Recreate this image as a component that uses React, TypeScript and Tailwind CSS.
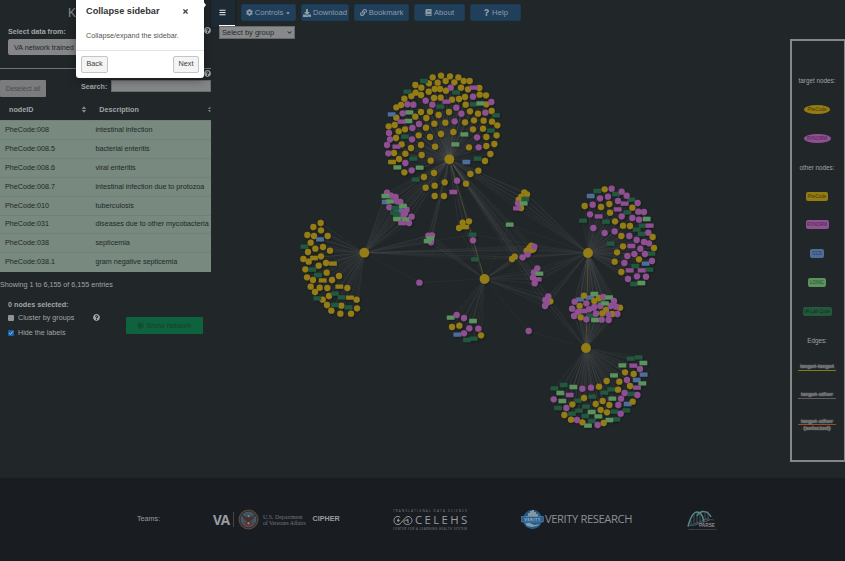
import React from "react";
import { FaBars, FaBook, FaCog, FaDownload, FaLink, FaQuestion, FaQuestionCircle, FaTimes, FaChevronDown, FaCaretDown } from "react-icons/fa";

type Point = [number, number];
type Kind = "Y" | "P" | "Q" | "R" | "D" | "L" | "B";
type Cluster = { origin: Point; hubs: Point[]; nodes: Partial<Record<Kind, string>>; faint?: boolean };

const COLORS: Record<Kind, string> = {
  Y: "#947b12", P: "#905092", Q: "#947b12", R: "#905092", D: "#24583c", L: "#5a935d", B: "#4d6d9b",
};

const HUB_TOP: Point = [449.3, 159.3];
const HUB_LEFT: Point = [364.3, 252.7];
const HUB_MID: Point = [484.5, 279];
const HUB_RIGHT: Point = [588, 253];
const HUB_LOW: Point = [586, 348];
const HUBS = [HUB_TOP, HUB_LEFT, HUB_MID, HUB_RIGHT, HUB_LOW];

// Node coordinates are in thirds of a pixel from each cluster's origin.
const CLUSTERS: Cluster[] = [
  {
    origin: [375, 65], hubs: [HUB_TOP],
    nodes: {
      Y: "173,37;198,32;225,34;250,37;266,48;284,48;188,53;212,48;238,52;162,55;121,60;139,68;179,72;195,72;213,77;258,68;279,73;313,69;122,83;161,80;109,93;138,90;88,101;177,99;197,98;231,104;252,102;270,96;314,89;333,91;272,119;334,118;64,127;78,120;138,141;165,140;121,155;191,150;222,141;285,139;309,146;350,138;64,158;154,159;297,166;326,167;351,170;367,181;41,184;59,180;90,193;71,199;153,188;178,176;211,173;270,172;324,191;294,193;365,211;334,216;235,201;198,207;131,211;165,216;63,219;80,238;108,249;138,240;180,245;282,247;334,243;358,237;346,267;330,288;57,264;91,266;72,282;140,270;167,287;88,322;147,336;177,324;310,317;286,327;273,356;209,352;179,362;152,368;179,393;207,393",
      P: "227,68;294,95;349,111;152,107;97,118;115,119;172,119;83,145;244,128;259,146;331,143;132,177;239,169;112,189;42,204;45,223;36,240;40,265;111,223;306,217;311,247;91,294;110,316;246,347",
      D: "147,48;97,80;243,82;196,125;296,118;363,151;348,197;90,215;115,281;308,281;122,344",
      L: "316,115;103,142;100,168;268,208;241,238;67,307;134,308",
      R: "296,68;214,110;79,170;64,245;235,381", B: "50,148;274,291", Q: "51,291",
    },
  },
  {
    origin: [290, 180], hubs: [HUB_LEFT],
    nodes: {
      Y: "92,129;70,141;93,151;52,165;72,168;113,168;62,188;76,206;99,201;54,216;120,212;40,237;56,245;93,229;86,257;108,249;46,268;110,278;51,292;69,300;126,300;147,288;62,320;89,323;112,324;75,336;172,324;117,348;98,359;200,359;111,375;154,377;201,385;124,392;151,401;183,401",
      Q: "72,234;129,251;98,301;148,320;180,353",
      D: "43,200;67,269;84,285;135,341;82,355;155,352;135,375;175,382", B: "90,178",
    },
  },
  {
    origin: [290, 180], hubs: [HUB_LEFT, HUB_TOP],
    nodes: {
      P: "291,38;303,47;317,51;321,64;331,66;298,82;336,95;350,89;345,100;365,110;357,129;340,107",
      B: "287,66;325,88", D: "316,84;312,98;320,103", L: "286,48;300,64;339,78;321,117;346,118", R: "336,129",
    },
  },
  { origin: [410, 180], hubs: [HUB_LEFT, HUB_TOP, HUB_MID], nodes: { P: "55,167;66,166;63,187", L: "53,183;61,175" } },
  { origin: [410, 180], hubs: [HUB_LEFT, HUB_MID], nodes: { P: "28,308" }, faint: true },
  { origin: [410, 180], hubs: [HUB_LEFT, HUB_RIGHT], nodes: { D: "188,164;195,238" }, faint: true },
  { origin: [410, 180], hubs: [HUB_TOP, HUB_MID], nodes: { Y: "158,128;177,124;147,144", Q: "165,141", P: "189,181" } },
  { origin: [410, 180], hubs: [HUB_TOP, HUB_RIGHT], nodes: { Y: "343,37;351,43;334,50;326,59;333,84", D: "346,57", P: "324,70", L: "341,70", R: "321,85" } },
  { origin: [410, 180], hubs: [HUB_MID, HUB_RIGHT], nodes: { L: "299,134" }, faint: true },
  { origin: [410, 180], hubs: [HUB_RIGHT, HUB_MID, HUB_LEFT, HUB_TOP], nodes: { Y: "314,230;306,237;364,197;358,204;370,208;364,210;350,212", P: "338,232;353,223;373,200" }, faint: true },
  { origin: [410, 180], hubs: [HUB_MID, HUB_RIGHT, HUB_TOP], nodes: { P: "382,265;372,277;369,293;374,310", R: "383,298", L: "388,281" } },
  { origin: [410, 180], hubs: [HUB_MID, HUB_RIGHT, HUB_LOW, HUB_TOP], nodes: { Y: "421,364", P: "415,349;406,360;405,378;411,368" } },
  { origin: [410, 180], hubs: [HUB_MID, HUB_LOW], nodes: { P: "356,453" }, faint: true },
  {
    origin: [410, 180], hubs: [HUB_MID],
    nodes: { L: "122,413;189,423", P: "140,405;162,414;178,445;205,446;162,460", Y: "126,441;148,437;213,466", B: "142,464", D: "191,476;171,480" },
  },
  {
    origin: [560, 180], hubs: [HUB_RIGHT],
    nodes: {
      D: "112,33;168,42;214,59;202,97;69,122;138,125;248,137;230,149;245,162;152,191;274,221;226,258;268,269;222,312",
      R: "194,71;173,88;116,109;269,137;214,198;209,271;245,271",
      Y: "134,28;74,78;123,81;148,72;150,98;217,83;165,124;189,137;210,138;184,168;278,171;282,204;189,199;171,217;164,245;184,276;237,238",
      P: "155,26;185,35;200,47;144,50;120,55;98,74;174,63;233,69;90,103;185,109;235,95;252,96;217,114;237,119;100,144;134,159;164,154;208,168;265,158;230,180;252,186;267,190;241,206;255,222;223,222;202,228;193,249;276,243;231,289;258,290;204,297",
      L: "260,117;244,309", B: "92,48;257,251",
    },
  },
  {
    origin: [560, 180], hubs: [HUB_RIGHT, HUB_LOW],
    nodes: {
      D: "92,407;125,363;52,395", B: "60,358;90,353",
      Y: "72,347;103,363;117,354;59,378;138,390;127,400;180,383;157,402;62,412",
      R: "70,393;95,386",
      P: "44,365;79,370;36,386;42,408;54,396;87,388;103,381;121,378;130,351;162,363;152,378;168,380;108,401;146,403;172,402;79,418;125,419;146,420",
      L: "103,342;147,352;135,370;105,420",
    },
  },
  {
    origin: [540, 320], hubs: [HUB_LOW],
    nodes: {
      D: "272,116;296,112;43,205;71,195;157,230;114,242;193,218;214,208;54,264;96,281;117,272;138,260;136,288;156,303;229,298;259,271;223,275;274,222",
      R: "280,137;291,203;89,225", B: "311,164;290,180;263,252",
      Y: "255,157;281,162;238,185;270,198;234,209;200,183;177,200;132,234;97,253;188,243;167,252;208,255;182,270;201,277;278,245;73,285;93,299;127,307;191,309",
      P: "300,147;261,180;254,219;292,225;243,236;235,255;242,281;127,206;153,203;41,238;79,264;111,300;173,315",
      L: "310,129;247,136;222,166;307,190;100,201;61,219;67,243;217,236;155,276;175,289;144,317;208,300",
    },
  },
];

const placed = CLUSTERS.flatMap((c) =>
  (Object.entries(c.nodes) as [Kind, string][]).flatMap(([kind, list]) =>
    list.split(";").map((pair) => {
      const [a, b] = pair.split(",").map(Number);
      return { kind, x: c.origin[0] + a / 3, y: c.origin[1] + b / 3, hubs: c.hubs, faint: c.faint };
    }),
  ),
);

function Network() {
  return (
    <svg className="absolute left-0 top-0 pointer-events-none" width="845" height="478" viewBox="0 0 845 478">
      <defs>
        {HUBS.map(([x, y], i) => (
          <radialGradient key={i} id={`edge${i}`} gradientUnits="userSpaceOnUse" cx={x} cy={y} r="60">
            <stop offset="0" stopColor="#777" stopOpacity="0.1" />
            <stop offset="0.35" stopColor="#808080" stopOpacity="0.15" />
            <stop offset="1" stopColor="#858585" stopOpacity="0.16" />
          </radialGradient>
        ))}
        <filter id="soft" x="-5%" y="-5%" width="110%" height="110%">
          <feDropShadow dx="0.9" dy="0.9" stdDeviation="0.8" floodColor="#000" floodOpacity="0.35" />
        </filter>
      </defs>
      {placed.flatMap((n, i) =>
        n.hubs.map((h, j) => (
          <line key={`${i}-${j}`} x1={n.x} y1={n.y} x2={h[0]} y2={h[1]} stroke={`url(#edge${HUBS.indexOf(h)})`} strokeWidth="0.7" opacity={n.faint ? 0.65 : 0.9} />
        )),
      )}
      <path d="M449.3 159.3 484.5 279M588 253 586 348" stroke="#65602f" strokeWidth="0.8" opacity="0.75" />
      <g filter="url(#soft)">
        {placed.map((n, i) =>
          n.kind === "Y" || n.kind === "P" ? (
            <circle key={i} cx={n.x} cy={n.y} r="3.15" fill={COLORS[n.kind]} />
          ) : (
            <rect key={i} x={n.x - 3.9} y={n.y - 2.2} width="7.8" height="4.4" rx="0.6" fill={COLORS[n.kind]} />
          ),
        )}
        {HUBS.map(([x, y]) => (
          <circle key={x} cx={x} cy={y} r="4.9" fill="#947b12" />
        ))}
      </g>
    </svg>
  );
}

const ROWS = [
  ["PheCode:008", "intestinal infection"],
  ["PheCode:008.5", "bacterial enteritis"],
  ["PheCode:008.6", "viral enteritis"],
  ["PheCode:008.7", "intestinal infection due to protozoa"],
  ["PheCode:010", "tuberculosis"],
  ["PheCode:031", "diseases due to other mycobacteria"],
  ["PheCode:038", "septicemia"],
  ["PheCode:038.1", "gram negative septicemia"],
];

function Sidebar() {
  return (
    <aside className="w-[211px] h-[478px] shrink-0 flex flex-col overflow-hidden text-[7.2px] leading-[9px] text-[#a2a5a7]">
      <h1 className="h-[26px] pl-[68px] pt-[6px] text-[12px] leading-[14px] text-[#8c9298]">K</h1>
      <div className="h-[13px] flex justify-between pl-2">
        <b className="pt-px tracking-[-0.03px]">Select data from:</b>
        <FaQuestionCircle className="size-[7px] mt-[1px]" />
      </div>
      <div className="ml-2 h-4 w-[180px] shrink-0 rounded-[2px] bg-[#858688] pl-[6px] leading-[17px] text-[#20262b]">VA network trained</div>
      <div className="mt-[13px] h-px shrink-0 bg-[#727577]" />
      <div className="h-[11px] shrink-0 flex justify-end pt-[1px]"><FaQuestionCircle className="size-[7px]" /></div>
      <div className="h-[22px] shrink-0 flex">
        <div className="h-[17px] w-[46px] rounded-[1px] bg-[#7a7c7d] text-center leading-[17px] text-[6.7px] text-[#494c4e]">Deselect all</div>
        <b className="ml-[35px] mt-[2px]">Search:</b>
        <div className="ml-auto h-[12px] w-[100px] border border-[#696b6d] bg-[#858688]" />
      </div>
      <div className="h-[18px] shrink-0 flex items-center pb-[4px] font-bold">
        <span className="w-[74px] pl-[9px]">nodeID</span>
        <svg className="ml-[8px] mr-[11px] w-[6px] h-[7px]" viewBox="0 0 6 7"><path d="M.7 3 3 .2 5.3 3ZM.7 4 3 6.8 5.3 4Z" fill="#858a8c" /></svg>
        <span className="w-[111px] pl-px">Description</span>
        <svg className="w-[3px] h-[7px]" viewBox="0 0 3 7"><path d="M0 3 2.3 .4V3ZM0 4H2.3V6.6Z" fill="#858a8c" /></svg>
      </div>
      <div className="h-[152px] shrink-0 bg-[#78897f] text-[#20282a]">
        {ROWS.map(([id, text]) => (
          <div key={id} className="h-[18.92px] flex items-center border-t border-[#718177] pb-[1px] whitespace-nowrap">
            <span className="w-[95.5px] pl-[5px]">{id}</span><span className="tracking-[-0.01px]">{text}</span>
          </div>
        ))}
      </div>
      <p className="mt-[8px] tracking-[-0.01px]">Showing 1 to 6,155 of 6,155 entries</p>
      <div className="mt-[11px] flex pl-2">
        <div className="w-[118px]">
          <b className="tracking-[0.01px]">0 nodes selected:</b>
          <div className="mt-[4px] flex items-center">
            <span className="size-[6px] rounded-[1px] bg-[#929394] mr-[4px]" />Cluster by groups
            <FaQuestionCircle className="ml-auto size-[7px] mr-[26px]" />
          </div>
          <div className="mt-[6px] flex items-center">
            <span className="size-[6px] rounded-[1px] bg-[#1762aa] mr-[4px]"><svg viewBox="0 0 6 6"><path d="m1.2 3 1.3 1.3L4.8 1.5" stroke="#dce4ea" strokeWidth=".8" fill="none" /></svg></span>Hide the labels
          </div>
        </div>
        <div className="mt-[17px] h-[17px] w-[77px] shrink-0 rounded-[1px] bg-[#0e633e] flex items-center justify-center gap-[2px] text-[#173f2c]">
          <svg className="size-[7px]" viewBox="0 0 8 8" fill="none" stroke="currentColor" strokeWidth=".8"><circle cx="4" cy="4" r="3.2" /><path d="m3 2.4 2.5 1.6L3 5.6Z" fill="currentColor" /></svg>
          Show network
        </div>
      </div>
    </aside>
  );
}

function Toolbar() {
  const button = "h-[17px] shrink-0 rounded-[2px] bg-[#203f5b] border border-[#1d3a53] flex items-center justify-center gap-[2px]";
  return (
    <nav className="flex pt-1 text-[7.7px] leading-[9px] text-[#8e9ca8]">
      <div className={`${button} w-[55px]`}><FaCog className="size-[7px]" />Controls<FaCaretDown className="size-[6px]" /></div>
      <div className={`${button} w-[48px] ml-[5px] gap-[1px]`}><FaDownload className="size-[8px]" />Download</div>
      <div className={`${button} w-[55px] ml-[5px]`}><FaLink className="size-[7px]" />Bookmark</div>
      <div className={`${button} w-[51px] ml-[5px] gap-[1px]`}><FaBook className="size-[7px]" />About</div>
      <div className={`${button} w-[51px] ml-[5px] gap-[1px]`}><FaQuestion className="size-[7px]" />Help</div>
    </nav>
  );
}

function Tour() {
  const button = "h-[17px] rounded-[2px] border border-[#c5c5c5] bg-[#f4f4f4] flex items-center justify-center text-[7.3px] text-[#424242]";
  return (
    <div className="absolute left-[76px] top-[-6px] h-[83.5px] w-[128px] rounded-[3px] bg-white shadow-[0_2px_10px_rgba(15,15,15,0.45)] flex flex-col text-[#333]">
      <div className="h-[34px] flex items-center pl-[10px] pr-[15px] justify-between">
        <b className="text-[9.2px] leading-[12px]">Collapse sidebar</b><FaTimes className="size-[7px] text-[#444]" />
      </div>
      <p className="h-[22px] pl-[10px] pt-[3px] text-[7.2px] leading-[9px] text-[#555]">Collapse/expand the sidebar.</p>
      <div className="border-t border-[#e4e4e4] flex items-center justify-between px-[5px] pt-[5px]">
        <div className={`${button} w-[27px]`}>Back</div><div className={`${button} w-[26px]`}>Next</div>
      </div>
      <svg className="absolute left-[127px] top-[6px]" width="4" height="10"><path d="M0 1 3 5 0 9Z" fill="white" /></svg>
    </div>
  );
}

const OTHER = [
  ["PheCode", "w-[22px] bg-[#947b12] text-[#42380e]"],
  ["RXNORM", "w-[23px] bg-[#905092] text-[#402744]"],
  ["CCS", "w-[14px] bg-[#4d6d9b] text-[#26364c]"],
  ["LOINC", "w-[18px] bg-[#5a935d] text-[#29462d]"],
  ["VA Lab Code", "w-[29px] bg-[#24583c] text-[#142d20]"],
];
const EDGES = [
  ["target-target", "bg-[#85791b]"],
  ["target-other", "bg-[#5c5d5e]"],
  ["target-other", "bg-[#9c4d21]"],
];

function Legend() {
  const cell = "h-[28.8px] shrink-0 flex items-center justify-center";
  return (
    <section className="ml-auto mt-[39px] h-[423px] w-[55px] shrink-0 border-2 border-r border-[#858789] pr-[2px] pt-[25.5px] flex flex-col text-[6.3px] leading-[7px] text-[#a1a4a6] whitespace-nowrap">
      <div className={cell}>target nodes:</div>
      <div className={cell}><span className="h-[9px] w-[26px] rounded-[50%] bg-[#947b12] text-center text-[4.6px] leading-[9px] text-[#42380e]">PheCode</span></div>
      <div className={cell}><span className="h-[9px] w-[27px] rounded-[50%] bg-[#905092] text-center text-[4.5px] leading-[9px] text-[#402744]">RXNORM</span></div>
      <div className={cell}>other nodes:</div>
      {OTHER.map(([label, style]) => (
        <div key={label} className={cell}><span className={`${style} h-[9px] rounded-[2px] text-center text-[4.5px] leading-[9px]`}>{label}</span></div>
      ))}
      <div className={cell}>Edges:</div>
      {EDGES.map(([label, style], i) => (
        <div key={i} className={cell}>
          <div className={`relative w-[38px] text-center text-[6.2px] leading-[6.5px] text-[#4b4d4f] [text-shadow:0_0_1px_#c5c5c5,0_0_1px_#c5c5c5] ${i === 2 ? "-top-[1.5px]" : "-top-[3px]"}`}>
            <span className={`${style} absolute left-0 w-full h-px ${i === 2 ? "top-[6px]" : "top-[7px]"}`} />
            <span className="relative">{label}{i === 2 && <><br />(selected)</>}</span>
          </div>
        </div>
      ))}
    </section>
  );
}

function Footer() {
  return (
    <footer className="h-[83px] bg-[#191c21] flex items-center pl-[137px] text-[#9a9da0]">
      <span className="w-[76px] shrink-0 text-[7.2px]">Teams:</span>
      <b className="w-[20px] shrink-0 text-[13.5px] leading-[16px] tracking-[-1.1px] font-['Open_Sans',sans-serif]">VA</b>
      <span className="h-[15px] w-px shrink-0 bg-[#42464a]" />
      <svg className="ml-[4px] shrink-0" width="21" height="21" viewBox="0 0 21 21">
        <circle cx="10.5" cy="10.5" r="9.4" fill="#222f43" stroke="#58483a" strokeWidth="1.3" />
        <circle cx="10.5" cy="10.5" r="7.3" fill="#395472" stroke="#776346" strokeWidth=".7" />
        <path d="M5 13h11l-2 3-3.5 1.5L7 16Z" fill="#6d3338" />
        <path d="M4 5.8c1 4 3 5 5 7l-1 2h5l-1-2c2-2 4-3 5-7-2 1-3.2 1-4.4 3l-2.1-2-2.1 2C7.2 6.8 6 6.8 4 5.8Z" fill="#443127" />
        <path d="m9.5 7 1-1 1.2 1-1 1.5ZM9 14l1.5-1 1.5 1-1.5 1.5Z" fill="#9b8a6c" />
      </svg>
      <span className="ml-[4px] w-[49.5px] shrink-0 whitespace-nowrap text-[5.9px] leading-[6px] text-[#74777a] font-['Liberation_Serif',serif]">U.S. Department<br /><span className="tracking-[-0.08px]">of Veterans Affairs</span></span>
      <b className="w-[80.5px] shrink-0 text-[7.2px]">CIPHER</b>
      <div className="w-[77px] shrink-0 whitespace-nowrap font-['Open_Sans',sans-serif]">
        <div className="text-[3px] leading-[4px] tracking-[1.18px] text-[#83878b]">TRANSLATIONAL DATA SCIENCE</div>
        <div className="h-[15px] flex items-center text-[11.4px] tracking-[2.35px]">
          <svg className="mr-[2px] shrink-0" width="20" height="11" viewBox="0 0 20 11" fill="none" stroke="currentColor" strokeWidth="1">
            <path d="M7.2 2.2C4.5.3 1 2 1 5.5s3.5 5 6 3.4L13 2.3C15.5.5 19 2.2 19 5.5S15 10.6 12 8.8c-2-1.4-1-3.6 1-3.6h2v3M6.8 5.4H3.9m1.3-1.8v3.7M14.8 3.8v1.4" />
          </svg>CELEHS
        </div>
        <div className="text-[3px] leading-[3px] tracking-[0.43px] text-[#83878b]">CENTER FOR A LEARNING HEALTH SYSTEM</div>
      </div>
      <div className="ml-[51px] w-[112px] shrink-0 flex items-center font-['Open_Sans',sans-serif] text-[11.2px] tracking-[-0.4px] text-[#8d9093] whitespace-nowrap">
        <svg className="mr-[1px] shrink-0" width="23" height="21" viewBox="0 0 23 21">
          <circle cx="11.5" cy="10.5" r="9.7" fill="#225b87" />
          <path d="M5 7h2V4h2V2h2V1h2v2h2v2h2v3H5Z" fill="#8397a3" /><path d="M4 14c3 1 4-1 7 1s5 0 8 0l-3 2-5 1-5-1Z" fill="#849cab" />
          <rect x=".5" y="7.5" width="22" height="5.5" fill="#246396" stroke="#8397a3" strokeWidth=".4" />
          <text x="11.5" y="11.8" textAnchor="middle" fontSize="4" fontWeight="bold" letterSpacing=".5" fill="#a5b1b9">VERITY</text>
        </svg>VERITY RESEARCH
      </div>
      <div className="ml-[54px] w-[32px] shrink-0">
        <svg className="overflow-visible" width="32" height="24" viewBox="0 0 32 24" fill="none">
          <path d="M1 18.5C4 6 9 1 14 6c2 2 2 5 3 8M10 8c4-7 11-5 14 1" stroke="#588a88" strokeWidth="1.5" />
          <path d="M4 12v6m3-11v9m3-11v11m3-11v9m5-10v8m3-9v7M2 18 22 10" stroke="#587679" strokeWidth=".6" />
          <path d="M8 17c7-4 11-3 15-5M19 11l8 1M5 18l10-3 7-3" stroke="#505061" strokeWidth=".8" />
          <text x="12" y="18.5" fontSize="4.6" fontWeight="bold" textLength="16" lengthAdjust="spacingAndGlyphs" fill="#888b90">PARSE</text>
          <text x="1.5" y="22" fontSize="2.1" textLength="28" lengthAdjust="spacingAndGlyphs" fill="#75797e">Translational Research Solutions</text>
        </svg>
      </div>
    </footer>
  );
}

export default function App() {
  return (
    <div className="relative h-[561px] w-[845px] overflow-hidden bg-[#212629] font-['Liberation_Sans',Arial,sans-serif]">
      <main className="relative flex h-[478px]">
        <Network />
        <Sidebar />
        <div className="w-[24px] h-[27px] shrink-0 rounded-br-[2px] bg-[#1d2a34] shadow-[0_0_2px_#0b1015] flex flex-col pl-2 pt-[9px] justify-between">
          <FaBars className="size-[7px] text-[#e2e7ea]" />
          <span className="h-[2px] bg-white" />
        </div>
        <div className="ml-[6px] w-[300px]">
          <Toolbar />
          <div className="-ml-[22px] mt-[5px] h-[13px] w-[76px] border border-[#68696b] bg-[#88898a] flex items-center justify-between pl-[2px] pr-[2px] text-[7.5px] leading-[9px] text-[#25292c]">
            Select by group<FaChevronDown className="size-[5px]" />
          </div>
        </div>
        <Legend />
      </main>
      <Footer />
      <Tour />
    </div>
  );
}
